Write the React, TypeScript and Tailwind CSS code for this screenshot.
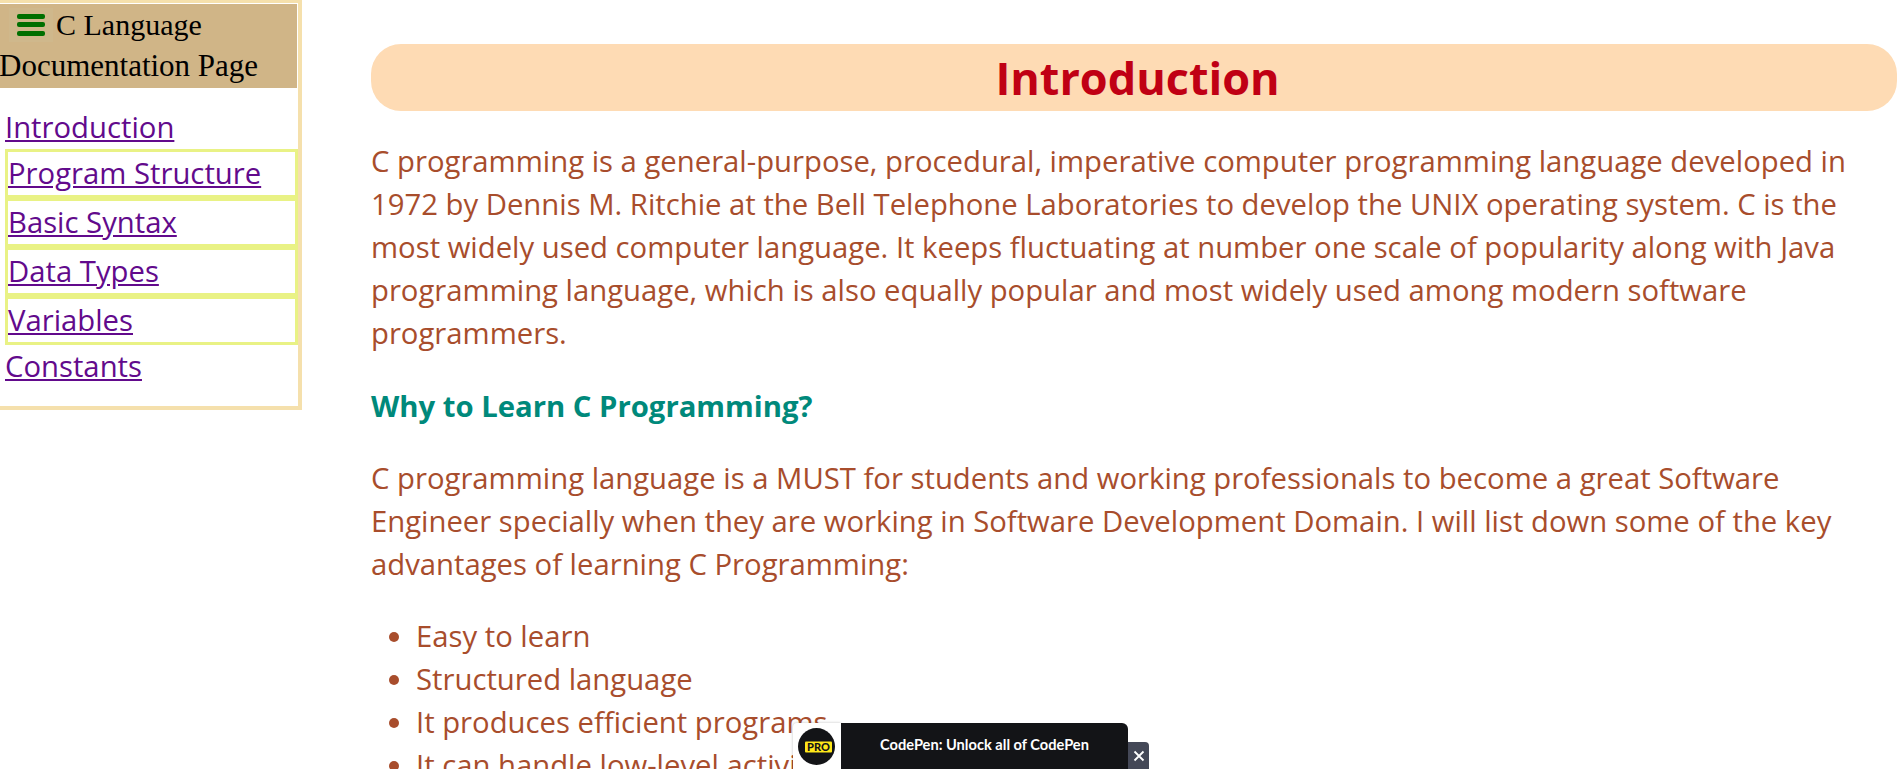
import React from "react";

const open = "font-['Open_Sans',sans-serif]";

function Link({ children }: { children: React.ReactNode }) {
  return <a href="#" className="text-[#620a8c] underline">{children}</a>;
}

function BoxedItem({ children }: { children: React.ReactNode }) {
  return (
    <div className="h-[49px] border-[3px] border-[#e9f285] text-[29.28px] leading-[42px]">
      <Link>{children}</Link>
    </div>
  );
}

export default function App() {
  return (
    <div className={`relative flex h-[769px] w-[1897px] overflow-hidden bg-white ${open}`}>
      <aside className="h-[410px] w-[302px] shrink-0 border-r-4 border-b-4 border-t-[3px] border-[#f5e0ac]">
        <div className="mt-px mr-px h-[84px] bg-[#d0b587] font-['Liberation_Serif',serif] text-[31px] leading-[41px] text-black">
          <div className="flex h-[41px] items-center">
            <span className="ml-[9px] flex h-[34px] w-[44px] flex-col justify-center gap-[3.5px] bg-[#cfb88c] px-[8px]">
              <i className="block h-[5px] rounded-[2px] bg-[#006f00]" />
              <i className="block h-[5px] rounded-[2px] bg-[#006f00]" />
              <i className="block h-[5px] rounded-[2px] bg-[#006f00]" />
            </span>
            <span className="ml-[3px] text-[30px]">C Language</span>
          </div>
          <div className="-ml-px">Documentation Page</div>
        </div>
        <div className="pt-[15px] pl-[5px] text-[29.28px] leading-[44px]">
          <div className="h-[46px] leading-[48px]"><Link>Introduction</Link></div>
          <BoxedItem>Program Structure</BoxedItem>
          <BoxedItem>Basic Syntax</BoxedItem>
          <BoxedItem>Data Types</BoxedItem>
          <BoxedItem>Variables</BoxedItem>
          <div className="h-[44px] leading-[42px]"><Link>Constants</Link></div>
        </div>
      </aside>
      <main className="ml-[69px] flex-1 pt-[44px]">
        <h1 className="h-[67px] rounded-[30px] bg-[#fedbb4] pl-[7px] text-center text-[45px] leading-[67px] font-bold text-[#c00014]">
          Introduction
        </h1>
        <div className="pt-[29px] text-[29.28px] leading-[43px] text-[#a84d2c]">
          <p>
            C programming is a general-purpose, procedural, imperative computer programming language developed in
            <br />
            1972 by Dennis M. Ritchie at the Bell Telephone Laboratories to develop the UNIX operating system. C is the
            <br />
            most widely used computer language. It keeps fluctuating at number one scale of popularity along with Java
            <br />
            programming language, which is also equally popular and most widely used among modern software
            <br />
            programmers.
          </p>
          <h2 className="mt-[30px] text-[29.28px] font-bold text-[#00897b]">Why to Learn C Programming?</h2>
          <p className="mt-[29px]">
            C programming language is a MUST for students and working professionals to become a great Software
            <br />
            Engineer specially when they are working in Software Development Domain. I will list down some of the key
            <br />
            advantages of learning C Programming:
          </p>
          <ul className="mt-[29px] list-disc pl-[45px]">
            <li>Easy to learn</li>
            <li>Structured language</li>
            <li>It produces efficient programs</li>
            <li>It can handle low-level activities</li>
          </ul>
        </div>
      </main>
      <div className="absolute top-[723px] left-[793px] flex h-[60px] font-['Lato',sans-serif]">
        <div className="flex w-[48px] rounded-tl-[4px] bg-white pt-[5px] pl-[5px] shadow-[0_0_3px_rgba(0,0,0,0.25)]">
          <svg width="37" height="37" viewBox="0 0 37 37">
            <circle cx="18.5" cy="18.5" r="18.5" fill="#131417" />
            <rect x="7" y="13.5" width="27" height="11" rx="1" fill="#ffe81a" />
            <text x="20.5" y="23" textAnchor="middle" fontSize="11" fontWeight="900" fill="#131417" fontFamily="Lato, sans-serif">PRO</text>
          </svg>
        </div>
        <div className="w-[287px] rounded-tr-[6px] bg-[#131417] pt-[11px] text-center text-[14.64px] font-bold text-white">
          CodePen: Unlock all of CodePen
        </div>
        <div className="mt-[19px] flex h-[28px] w-[21px] items-center justify-center rounded-tr-[4px] bg-[#444857]">
          <svg width="12" height="12" viewBox="0 0 12 12" stroke="#fff" strokeWidth="1.8">
            <path d="M1.5 1.5l9 9M10.5 1.5l-9 9" />
          </svg>
        </div>
      </div>
    </div>
  );
}
